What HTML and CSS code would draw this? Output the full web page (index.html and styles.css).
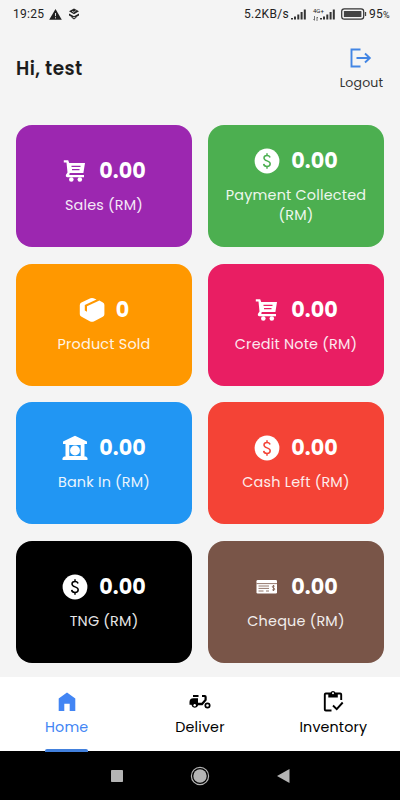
FILE: index.html
```html
<!DOCTYPE html>
<html lang="en">
<head>
    <meta charset="UTF-8">
    <meta name="viewport" content="width=device-width, initial-scale=1.0">
    <title>Home</title>
    <link rel="stylesheet" href="styles.css">
</head>
<body>
    <!-- Shared card icons -->
    <svg class="icon-defs" width="0" height="0">
        <symbol id="icon-cart" viewBox="0 0 26 26">
            <path d="M1.800 2.300h4.400l1 2.700H23l-1.600 10H7.700l-.4 2H22v2.200H5.500a1.800 1.800 0 0 1-1.500-2.400L5.500 14.500 4.500 4.500H1.800z" fill="currentColor"/>
            <path d="M9.500 8.400h9M10 11.700h7.500" stroke="var(--card)" stroke-width="1.300"/>
            <circle cx="9.300" cy="21.500" r="2.300" fill="currentColor"/>
            <circle cx="17.800" cy="21.500" r="2.300" fill="currentColor"/>
        </symbol>
        <symbol id="icon-dollar" viewBox="0 0 26 26">
            <circle cx="13" cy="13" r="12.400" fill="currentColor"/>
            <path d="M16 9.500c-.3-1.300-1.400-2-3-2s-3 .9-3 2.500c0 3.600 6.200 2.100 6.200 5.700 0 1.700-1.300 2.700-3.200 2.700s-3.200-.9-3.300-2.500M13 5.300v2.200M13 18.400v2.300" fill="none" stroke="var(--card)" stroke-width="1.500"/>
        </symbol>
        <symbol id="icon-box" viewBox="0 0 26 26">
            <path d="M11.500 1.300q1.500-.7 3 0L17.500 2.500 5.800 8v5.500l2.200 1.200V9.200L20.400 3.600l3.500 1.900q1.500.8 1.500 2.500v9.200q0 1.800-1.600 2.600l-9 4.600q-1.800.8-3.600 0l-8.600-4.600Q.8 19 .8 17.200V8q0-1.600 1.600-2.400z" fill="currentColor"/>
        </symbol>
        <symbol id="icon-bank" viewBox="0 0 26 26">
            <path d="M13 .8 25 6.500V9h-2.500v12.500H24l1.500 1.500v2H.5v-2L2 21.500h1.500V9H1V6.500z" fill="currentColor"/>
            <path d="M7.300 10h11.400v11H7.300z" fill="var(--card)"/>
            <circle cx="13" cy="15.500" r="4.900" fill="currentColor"/>
        </symbol>
        <symbol id="icon-cheque" viewBox="0 0 26 26">
            <rect x="2.500" y="6" width="20.500" height="13.500" rx="1.200" fill="currentColor"/>
            <path d="M2.500 9.600H23M4.500 12h10.500M4.500 14.400H15M4.500 17h5M12 17h3" stroke="var(--card)" stroke-width=".8"/>
            <path d="M20.700 12.300c-1-1-2.400-.6-2.400.5 0 1.400 2.500.8 2.500 2.300 0 1.300-1.800 1.500-2.700.5M19.500 11v6" fill="none" stroke="var(--card)" stroke-width=".8"/>
        </symbol>
    </svg>

    <div class="status-bar">
        <span class="time">19:25</span>
        <svg class="status-warn" width="13" height="11" viewBox="0 0 13 11"><path d="M6.500.1 12.800 10.800H.2z" fill="#222"/><path d="M6.500 4v3.200M6.500 8.200v1.200" stroke="#ddd" stroke-width="1"/></svg>
        <svg class="status-layers" width="12" height="12" viewBox="0 0 12 12"><path d="M6 .5 11 3.300 6 6.200 1 3.300zM1 5.500l5 2.800 5-2.800v2L6 10.300 1 7.500zM3 9.300l3 2.200 3-2.200z" fill="#222"/><path d="M4 3.300l2 1 2-2" stroke="#ddd" stroke-width=".8" fill="none"/></svg>
        <span class="speed">5.2KB/s</span>
        <svg class="signal" width="15" height="11" viewBox="0 0 15 11"><path d="M1 10.500V9M4 10.500V7.500M7.300 10.500V5.500M10.600 10.500V3M13.800 10.500V.5" stroke="#333" stroke-width="2"/></svg>
        <span class="network"><span>4G+</span><svg width="6" height="5" viewBox="0 0 6 5"><path d="M1.500 0v4M.5 3l1 1.500M4 5V1l1 1" stroke="#555" stroke-width=".8" fill="none"/></svg></span>
        <svg class="signal signal-2" width="15" height="11" viewBox="0 0 15 11"><path d="M1 10.500V9M4 10.500V7.500M7.300 10.500V5.500M10.600 10.500V3M13.800 10.500V.5" stroke="#333" stroke-width="2"/></svg>
        <svg class="battery" width="26" height="12" viewBox="0 0 26 12"><rect x=".7" y=".9" width="22" height="10.200" rx="2.700" fill="none" stroke="#333" stroke-width="1.200"/><rect x="2.900" y="3" width="17.500" height="6" rx=".5" fill="#444"/><path d="M24.500 4v4" stroke="#444" stroke-width="1.300"/></svg>
        <span class="percent">95<small>%</small></span>
    </div>

    <header class="header">
        <h1>Hi, test</h1>
        <button class="logout">
            <svg width="22" height="20" viewBox="0 0 22 20"><path d="M10.500 1.500H1.500v17h9M6.500 10H20M15 5.500 19.800 10 15 14.500" fill="none" stroke="#4285e4" stroke-width="1.900"/></svg>
            <span>Logout</span>
        </button>
    </header>

    <main class="cards">
        <div class="card purple">
            <div class="card-top"><svg class="card-icon"><use href="#icon-cart"/></svg><span class="value">0.00</span></div>
            <div class="label">Sales (RM)</div>
        </div>
        <div class="card green">
            <div class="card-top"><svg class="card-icon"><use href="#icon-dollar"/></svg><span class="value">0.00</span></div>
            <div class="label">Payment Collected (RM)</div>
        </div>
        <div class="card orange">
            <div class="card-top"><svg class="card-icon"><use href="#icon-box"/></svg><span class="value">0</span></div>
            <div class="label">Product Sold</div>
        </div>
        <div class="card pink">
            <div class="card-top"><svg class="card-icon"><use href="#icon-cart"/></svg><span class="value">0.00</span></div>
            <div class="label">Credit Note (RM)</div>
        </div>
        <div class="card blue">
            <div class="card-top"><svg class="card-icon"><use href="#icon-bank"/></svg><span class="value">0.00</span></div>
            <div class="label">Bank In (RM)</div>
        </div>
        <div class="card red">
            <div class="card-top"><svg class="card-icon"><use href="#icon-dollar"/></svg><span class="value">0.00</span></div>
            <div class="label">Cash Left (RM)</div>
        </div>
        <div class="card black">
            <div class="card-top"><svg class="card-icon"><use href="#icon-dollar"/></svg><span class="value">0.00</span></div>
            <div class="label">TNG (RM)</div>
        </div>
        <div class="card brown">
            <div class="card-top"><svg class="card-icon"><use href="#icon-cheque"/></svg><span class="value">0.00</span></div>
            <div class="label">Cheque (RM)</div>
        </div>
    </main>

    <nav class="tab-bar">
        <a class="tab active">
            <svg width="24" height="24" viewBox="0 0 24 24"><path d="M12 2.600 20.300 8.500V21h-5.600v-7.300H9.300V21H3.700V8.500z" fill="currentColor"/></svg>
            <span>Home</span>
        </a>
        <a class="tab">
            <svg width="24" height="24" viewBox="0 0 24 24"><path d="M5 5h5.500v2H5z" fill="currentColor"/><path d="M1.500 14.800V12q0-3.800 3.800-3.800H10v4.500h3.600l2.900-3.300V7H14V5h2.800q1.900 0 1.900 2v3.200l-4.200 5H10.200a3.500 3.500 0 0 1-6.800-.4z" fill="currentColor"/><circle cx="6.700" cy="15.200" r="1.200" fill="#fff"/><circle cx="19.500" cy="15.500" r="2.200" fill="none" stroke="currentColor" stroke-width="1.700"/></svg>
            <span>Deliver</span>
        </a>
        <a class="tab">
            <svg width="24" height="24" viewBox="0 0 24 24"><path d="M10.500 20.500H4.800q-1 0-1-1v-15q0-1 1-1h14.400q1 0 1 1V10" fill="none" stroke="currentColor" stroke-width="1.900"/><path d="M7.300 3h2.200a2.600 2.600 0 0 1 5 0h2.300v4.500H7.300z" fill="currentColor"/><circle cx="12" cy="3.300" r="1" fill="#fff"/><path d="m12 15.500 3.700 3.600 6-6.600" fill="none" stroke="currentColor" stroke-width="1.900"/></svg>
            <span>Inventory</span>
        </a>
    </nav>

    <div class="system-nav">
        <svg width="12" height="12"><rect width="12" height="12" rx=".7" fill="#b4b4b4"/></svg>
        <svg width="20" height="20"><circle cx="10" cy="10" r="8.600" fill="none" stroke="#b4b4b4" stroke-width="1.200"/><circle cx="10" cy="10" r="6.700" fill="#b4b4b4"/></svg>
        <svg width="13" height="14"><path d="M0 7 12.500 0v14z" fill="#b4b4b4"/></svg>
    </div>
</body>
</html>
```
FILE: styles.css
```css
* { box-sizing: border-box; }
body {
    margin: 0;
    height: 800px;
    display: flex;
    flex-direction: column;
    background-color: #f4f4f4;
    font-family: Poppins, Inter, "Liberation Sans", sans-serif;
    color: #1c1c1c;
    overflow: hidden;
}
svg { display: block; flex: none; }
.icon-defs { position: absolute; }

.status-bar { height: 28px; padding: 0 9px 0 13px; display: flex; align-items: center; font-family: Roboto, sans-serif; font-size: 12px; letter-spacing: 0.3px; color: #222; }
.time { width: 31px; }
.status-warn { margin-left: 5px; }
.status-layers { margin-left: 6px; }
.speed { margin-left: auto; width: 46px; white-space: nowrap; }
.signal { margin-left: 1px; }
.network { display: flex; flex-direction: column; gap: 2px; width: 13px; margin-left: 7px; font-size: 6px; line-height: 6px; letter-spacing: 0; white-space: nowrap; }
.signal-2 { margin-left: -6px; }
.battery { margin-left: 6px; }
.percent { margin-left: 2px; width: 22px; white-space: nowrap; }
.percent small { font-size: 9px; letter-spacing: 0; }

.header { height: 97px; padding: 0 16px; display: flex; justify-content: space-between; }
.header h1 { margin: 27px 0 0; font-size: 18.5px; line-height: 27px; font-weight: 600; letter-spacing: 0.4px; }
.logout { display: flex; flex-direction: column; align-items: center; width: 45px; margin-top: 20px; padding: 0; border: none; background: none; font-family: inherit; font-size: 12.5px; line-height: 18px; letter-spacing: 0.2px; color: #333; }
.logout svg { margin-left: -1px; }
.logout span { margin-top: 6px; }

.cards { padding: 0 16px; display: grid; grid-template-columns: 1fr 1fr; grid-auto-rows: 122px; gap: 16.6px 16px; }
.card { display: flex; flex-direction: column; align-items: center; justify-content: center; padding: 0 12px 1px; border-radius: 16px; background-color: var(--card); color: #fff; }
.card-top { display: flex; align-items: center; height: 30px; gap: 11px; }
.card-icon { width: 26px; height: 26px; }
.value { font-size: 20.7px; line-height: 30px; font-weight: 700; }
.label { margin-top: 9px; font-size: 14.4px; line-height: 20px; letter-spacing: 0.2px; text-align: center; opacity: 0.9; }
.purple { --card: #9c27b0; }
.green { --card: #4caf50; }
.orange { --card: #ff9800; }
.pink { --card: #e91e63; }
.blue { --card: #2196f3; }
.red { --card: #f44336; }
.black { --card: #000; }
.brown { --card: #795548; }

.tab-bar { margin-top: auto; height: 74px; display: grid; grid-template-columns: repeat(3, 1fr); background-color: #fff; }
.tab { position: relative; display: flex; flex-direction: column; align-items: center; padding-top: 13px; font-size: 14.3px; line-height: 20px; letter-spacing: 0.15px; color: #000; }
.tab span { margin-top: 3px; }
.tab.active { color: #4285f4; }
/* Indicator runs over the top edge of the system bar */
.tab.active::after { content: ""; position: absolute; bottom: -1px; width: 43px; height: 3px; border-radius: 2px 2px 0 0; background-color: #4280dc; z-index: 1; }

.system-nav { height: 49px; padding-top: 1px; display: flex; align-items: center; justify-content: center; gap: 67px; background-color: #000; }
```
